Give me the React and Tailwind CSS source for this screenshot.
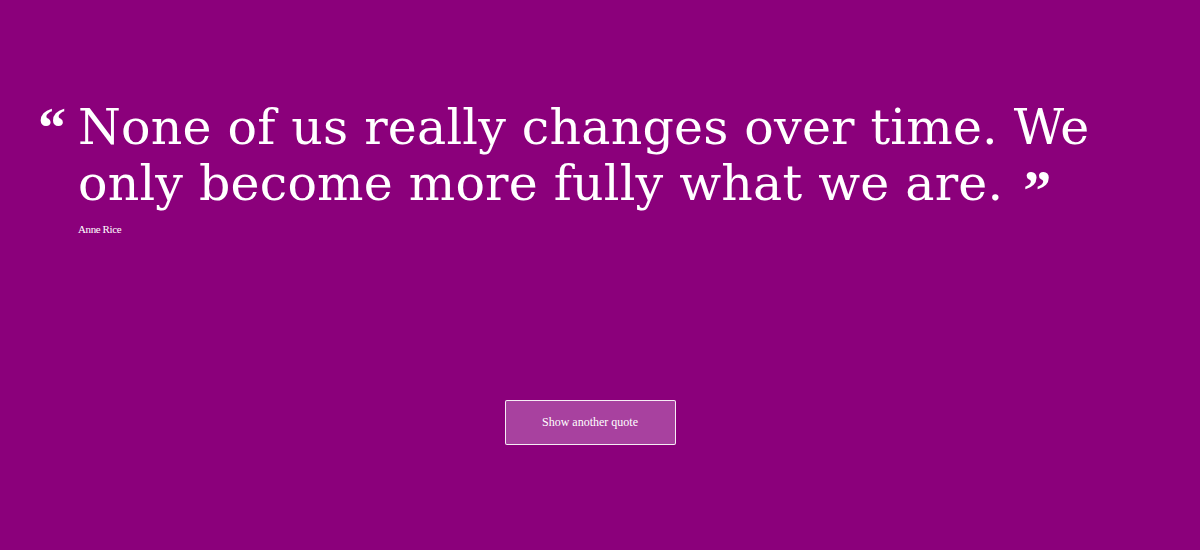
export default function App() {
  return (
    <div className="flex h-[550px] w-full flex-col bg-[#8b007b] font-['DejaVu_Serif','Liberation_Serif',serif] text-white">
      <blockquote className="flex items-start pl-[38px] pr-[40px] pt-[100px]">
        <span className="mr-[12px] mt-[8px] font-['Liberation_Serif',serif] text-[56px] font-bold leading-[40px]">“</span>
        <div>
          <p className="whitespace-nowrap text-[49px] leading-[56px] tracking-[0.2px]">
            None of us really changes over time. We
            <br />
            only become more fully what we are.
            <span className="ml-[20px] inline-block translate-y-[10px] font-['Liberation_Serif',serif] text-[56px] font-bold leading-[40px]">”</span>
          </p>
          <p className="mt-[9px] font-['Liberation_Serif',serif] text-[11px] tracking-[-0.4px]">Anne Rice</p>
        </div>
      </blockquote>
      <div className="mt-[162px] flex justify-center pr-[20px]">
        <button className="h-[45px] w-[171px] rounded-[2px] border border-white/90 bg-[#a8419f] font-['Liberation_Serif',serif] text-[12px] text-white">
          Show another quote
        </button>
      </div>
    </div>
  );
}
